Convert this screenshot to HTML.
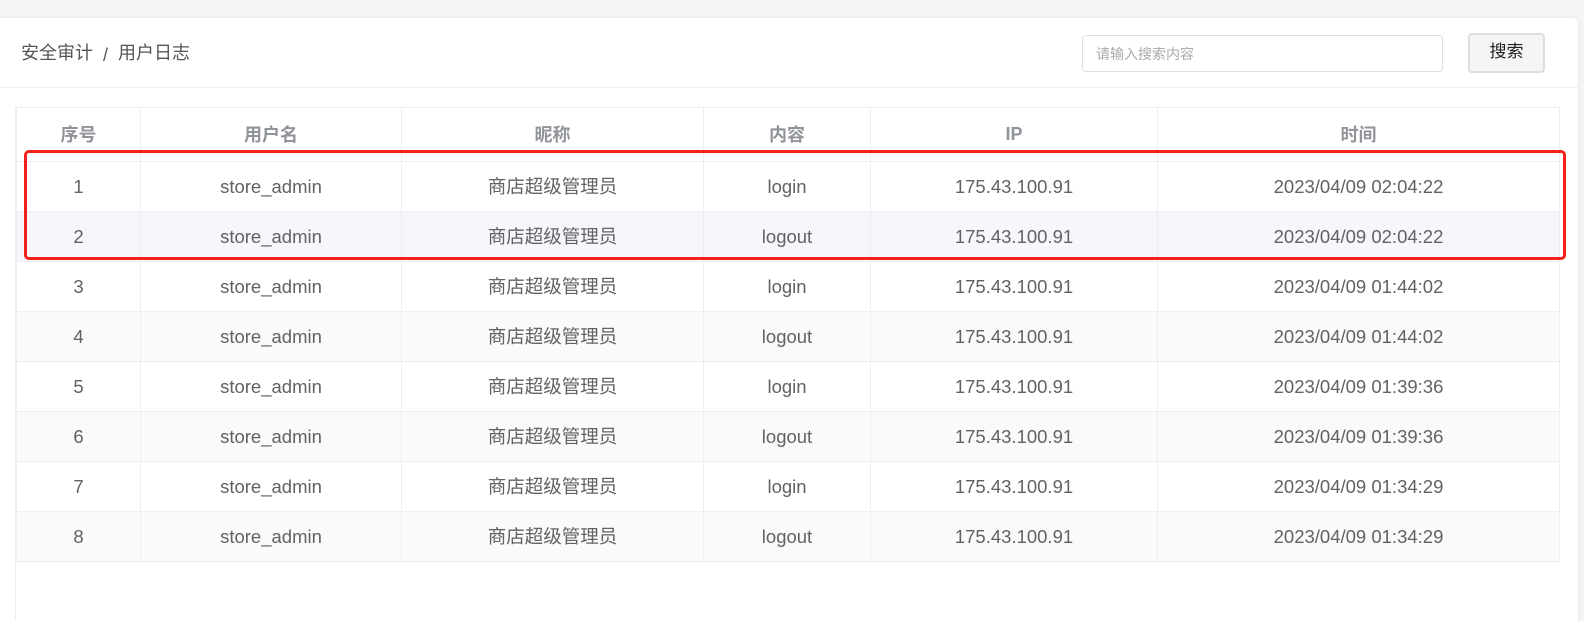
<!DOCTYPE html>
<html><head><meta charset="utf-8"><style>
body{margin:0;width:1584px;height:621px;background:#f4f4f4;font-family:"Liberation Sans","Noto Sans CJK SC",sans-serif;overflow:hidden;position:relative}
.card{position:absolute;left:0;top:18px;width:1578px;height:603px;background:#fff;border-radius:0 6px 0 0;box-shadow:0 0 3px rgba(0,0,0,.08)}
.bc{position:absolute;left:21px;top:43px;font-size:18px;color:#555;line-height:24px}
.zh{position:relative;top:-1px}
.bc .zh{top:-2px}
.hline{position:absolute;left:0;top:87px;width:1578px;height:1px;background:#eee}
.vl{position:absolute;left:15px;top:106px;width:1px;height:515px;background:#ebeef5}
.inp{position:absolute;left:1082px;top:35px;width:361px;height:37px;border:1px solid #dcdfe6;border-radius:4px;box-sizing:border-box;font-size:14px;color:#aaa;padding:8px 0 0 13px;line-height:20px}
.btn{position:absolute;left:1468px;top:33px;width:77px;height:40px;border:2px solid #ddd;border-radius:4px;background:#f5f5f5;box-sizing:border-box;font-size:17px;color:#222;text-align:center;line-height:34px}
table{position:absolute;left:16px;top:107px;border-collapse:collapse;width:1544px;font-size:18.5px;color:#606266}
td,th{border:1px solid #ebeef5;text-align:center;padding:0}
th{height:53px;color:#909399;font-weight:bold;font-size:18px}
td{height:49px}
tr.s td{background:#fafafa}
tr.h td{background:#f5f7fa}
.red{position:absolute;left:24px;top:150px;width:1542px;height:110px;border:3px solid #f5211a;border-radius:5px;box-sizing:border-box}
</style></head><body>
<div class="card"></div>
<div class="bc"><span class="zh">安全审计</span> &nbsp;/&nbsp; <span class="zh">用户日志</span></div>
<div class="hline"></div>
<div class="inp">请输入搜索内容</div>
<div class="btn">搜索</div>
<div class="vl"></div>
<table>
<tr><th style="width:123px"><span class="zh">序号</span></th><th style="width:260px"><span class="zh">用户名</span></th><th style="width:301px"><span class="zh">昵称</span></th><th style="width:166px"><span class="zh">内容</span></th><th style="width:286px">IP</th><th><span class="zh">时间</span></th></tr>
<tr><td>1</td><td>store_admin</td><td><span class="zh">商店超级管理员</span></td><td>login</td><td>175.43.100.91</td><td>2023/04/09 02:04:22</td></tr>
<tr class="h"><td>2</td><td>store_admin</td><td><span class="zh">商店超级管理员</span></td><td>logout</td><td>175.43.100.91</td><td>2023/04/09 02:04:22</td></tr>
<tr><td>3</td><td>store_admin</td><td><span class="zh">商店超级管理员</span></td><td>login</td><td>175.43.100.91</td><td>2023/04/09 01:44:02</td></tr>
<tr class="s"><td>4</td><td>store_admin</td><td><span class="zh">商店超级管理员</span></td><td>logout</td><td>175.43.100.91</td><td>2023/04/09 01:44:02</td></tr>
<tr><td>5</td><td>store_admin</td><td><span class="zh">商店超级管理员</span></td><td>login</td><td>175.43.100.91</td><td>2023/04/09 01:39:36</td></tr>
<tr class="s"><td>6</td><td>store_admin</td><td><span class="zh">商店超级管理员</span></td><td>logout</td><td>175.43.100.91</td><td>2023/04/09 01:39:36</td></tr>
<tr><td>7</td><td>store_admin</td><td><span class="zh">商店超级管理员</span></td><td>login</td><td>175.43.100.91</td><td>2023/04/09 01:34:29</td></tr>
<tr class="s"><td>8</td><td>store_admin</td><td><span class="zh">商店超级管理员</span></td><td>logout</td><td>175.43.100.91</td><td>2023/04/09 01:34:29</td></tr>
</table>
<div class="red"></div>
</body></html>
